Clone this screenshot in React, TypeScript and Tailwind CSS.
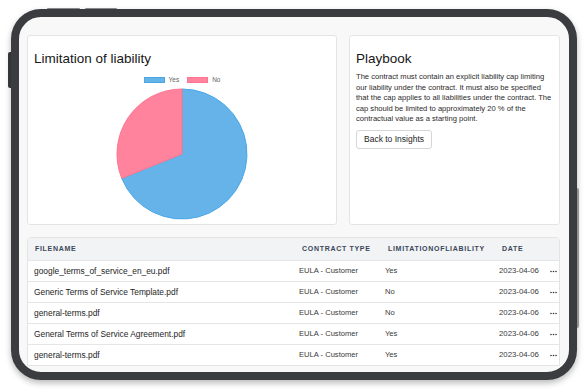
import React from 'react';

type Row = { file: string; type: string; limit: string; date: string };

const rows: Row[] = [
    { file: 'google_terms_of_service_en_eu.pdf', type: 'EULA - Customer', limit: 'Yes', date: '2023-04-06' },
    { file: 'Generic Terms of Service Template.pdf', type: 'EULA - Customer', limit: 'No', date: '2023-04-06' },
    { file: 'general-terms.pdf', type: 'EULA - Customer', limit: 'No', date: '2023-04-06' },
    { file: 'General Terms of Service Agreement.pdf', type: 'EULA - Customer', limit: 'Yes', date: '2023-04-06' },
    { file: 'general-terms.pdf', type: 'EULA - Customer', limit: 'Yes', date: '2023-04-06' },
];

const cols = 'grid grid-cols-[265px_86px_114px_51px_1fr] items-center';

// pie: r=65, "No" slice covers the last 112 degrees (counter-clockwise from 12 o'clock)
const PieChart: React.FC = () => (
    <svg width="132" height="132" viewBox="0 0 132 132">
        <path d="M66,66 L66,1 A65,65 0 1 1 5.73,90.35 Z" fill="#66b3ea" stroke="#4aa7e6" strokeWidth="1" />
        <path d="M66,66 L5.73,90.35 A65,65 0 0 1 66,1 Z" fill="#ff839c" stroke="#ff7590" strokeWidth="1" />
    </svg>
);

const Dots: React.FC = () => (
    <svg width="7" height="3" viewBox="0 0 7 3">
        <circle cx="1" cy="1.5" r="0.8" fill="#333" />
        <circle cx="3.5" cy="1.5" r="0.8" fill="#333" />
        <circle cx="6" cy="1.5" r="0.8" fill="#333" />
    </svg>
);

export default function App() {
    return (
        <div className="relative w-[584px] h-[389px] bg-white overflow-hidden font-['Liberation_Sans',Arial,sans-serif]">
            {/* device buttons */}
            <div className="absolute left-[8px] top-[52px] w-[4px] h-[36px] rounded-l-[2px] bg-[#3b3c40]" />
            <div className="absolute left-[47px] top-[8px] w-[33px] h-[2px] rounded-t-[1px] bg-[#8c8d91]" />
            <div className="absolute left-[85px] top-[8px] w-[32px] h-[2px] rounded-t-[1px] bg-[#8c8d91]" />
            <div className="absolute left-[576px] top-[188px] w-[3px] h-[140px] rounded-r-[2px] bg-[#a4a5a8]" />

            <div className="relative ml-[11px] mt-[9px] w-[566px] h-[371px] rounded-[30px] border-[8px] border-[#3b3c40] bg-[#f8f8f8] overflow-hidden shadow-[0_3px_6px_rgba(0,0,0,0.28)]">
                <div className="pt-[18px] pl-[8px] pr-[9px]">
                    <div className="flex gap-[12px] h-[190px]">
                        <div className="w-[310px] h-full bg-white border border-[#e4e4e4] rounded-[3px] pt-[15px] px-[6px] flex flex-col">
                            <h2 className="text-[13.5px] leading-[16px] text-[#161616]">Limitation of liability</h2>
                            <div className="mt-[9px] flex justify-center items-center gap-[4px] h-[8px] text-[6.5px] text-[#666]">
                                <span className="w-[21px] h-[6px] bg-[#66b3ea] border border-[#4aa7e6]" />
                                <span>Yes</span>
                                <span className="ml-[4px] w-[21px] h-[6px] bg-[#ff839c] border border-[#ff7590]" />
                                <span>No</span>
                            </div>
                            <div className="mt-[4px] flex justify-center">
                                <PieChart />
                            </div>
                        </div>

                        <div className="flex-1 h-full bg-white border border-[#e4e4e4] rounded-[3px] pt-[15px] pl-[6px] pr-[5px]">
                            <h2 className="text-[13.5px] leading-[16px] text-[#161616]">Playbook</h2>
                            <p className="mt-[5px] text-[7.6px] leading-[10.5px] text-[#2a2a2a]">
                                The contract must contain an explicit liability cap limiting our liability under the contract. It must also be specified that the cap applies to all liabilities under the contract. The cap should be limited to approximately 20 % of the contractual value as a starting point.
                            </p>
                            <button className="mt-[5px] w-[76px] h-[19px] border border-[#d6d6d6] rounded-[3px] bg-white text-[8.5px] text-[#1e1e1e]">
                                Back to Insights
                            </button>
                        </div>
                    </div>

                    <div className="mt-[12px] bg-white border border-[#e4e4e4] rounded-t-[4px] overflow-hidden">
                        <div className={`${cols} h-[22px] bg-[#f1f3f5] text-[7px] font-bold tracking-[0.7px] text-[#3a4759]`}>
                            <div className="pl-[7px]">FILENAME</div>
                            <div className="pl-[9px]">CONTRACT TYPE</div>
                            <div className="pl-[9px]">LIMITATIONOFLIABILITY</div>
                            <div className="pl-[9px]">DATE</div>
                            <div />
                        </div>
                        {rows.map((r, i) => (
                            <div key={i} className={`${cols} h-[21px] border-t border-[#e6e6e6]`}>
                                <div className="pl-[6px] text-[8.4px] text-[#1e1e1e]">{r.file}</div>
                                <div className="pl-[6px] text-[7.6px] text-[#3a3a3a]">{r.type}</div>
                                <div className="pl-[6px] text-[7.6px] text-[#3a3a3a]">{r.limit}</div>
                                <div className="pl-[6px] text-[7.8px] text-[#3a3a3a]">{r.date}</div>
                                <div className="pl-[6px] flex items-center"><Dots /></div>
                            </div>
                        ))}
                    </div>
                </div>
            </div>
        </div>
    );
}
